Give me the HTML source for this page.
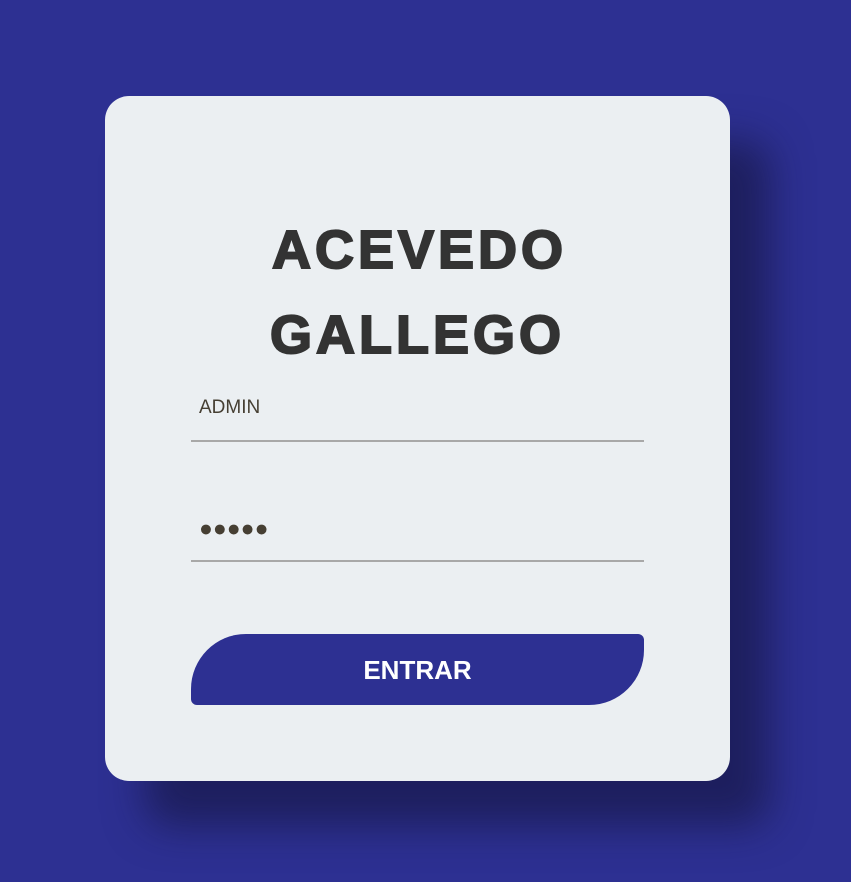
<!DOCTYPE html>
<html><head><style>
html,body{margin:0;padding:0}
body{width:851px;height:882px;background:#2d3092;position:relative;overflow:hidden;font-family:"Liberation Sans",sans-serif}
.card{position:absolute;left:105px;top:96px;width:625px;height:685px;background:#ebeff2;border-radius:24px;box-shadow:40px 45px 40px rgba(20,20,60,.6)}
h1{position:absolute;left:0;width:625px;top:112px;margin:0;text-align:center;font-size:54px;line-height:85px;font-weight:bold;color:#333;letter-spacing:4px;text-indent:4px;-webkit-text-stroke:2px #333}
.f{position:absolute;left:86px;width:453px;border-bottom:2px solid #a8a8a8;color:#463f33}
.u{top:298px;height:46px;font-size:19px;line-height:28px}
.u span{padding-left:8px}
.p{top:410px;height:54px;font-size:23px;line-height:44px;letter-spacing:0px}
.p span{padding-left:8px}
.b{position:absolute;left:86px;top:538px;width:453px;height:71px;background:#2d3092;border-radius:55px 6px 55px 6px;color:#fff;font-weight:bold;font-size:26px;line-height:73px;text-align:center}
</style></head><body>
<div class="card">
<h1>ACEVEDO<br>GALLEGO</h1>
<div class="f u"><span>ADMIN</span></div>
<div class="f p"><span>●●●●●</span></div>
<div class="b">ENTRAR</div>
</div>
</body></html>
